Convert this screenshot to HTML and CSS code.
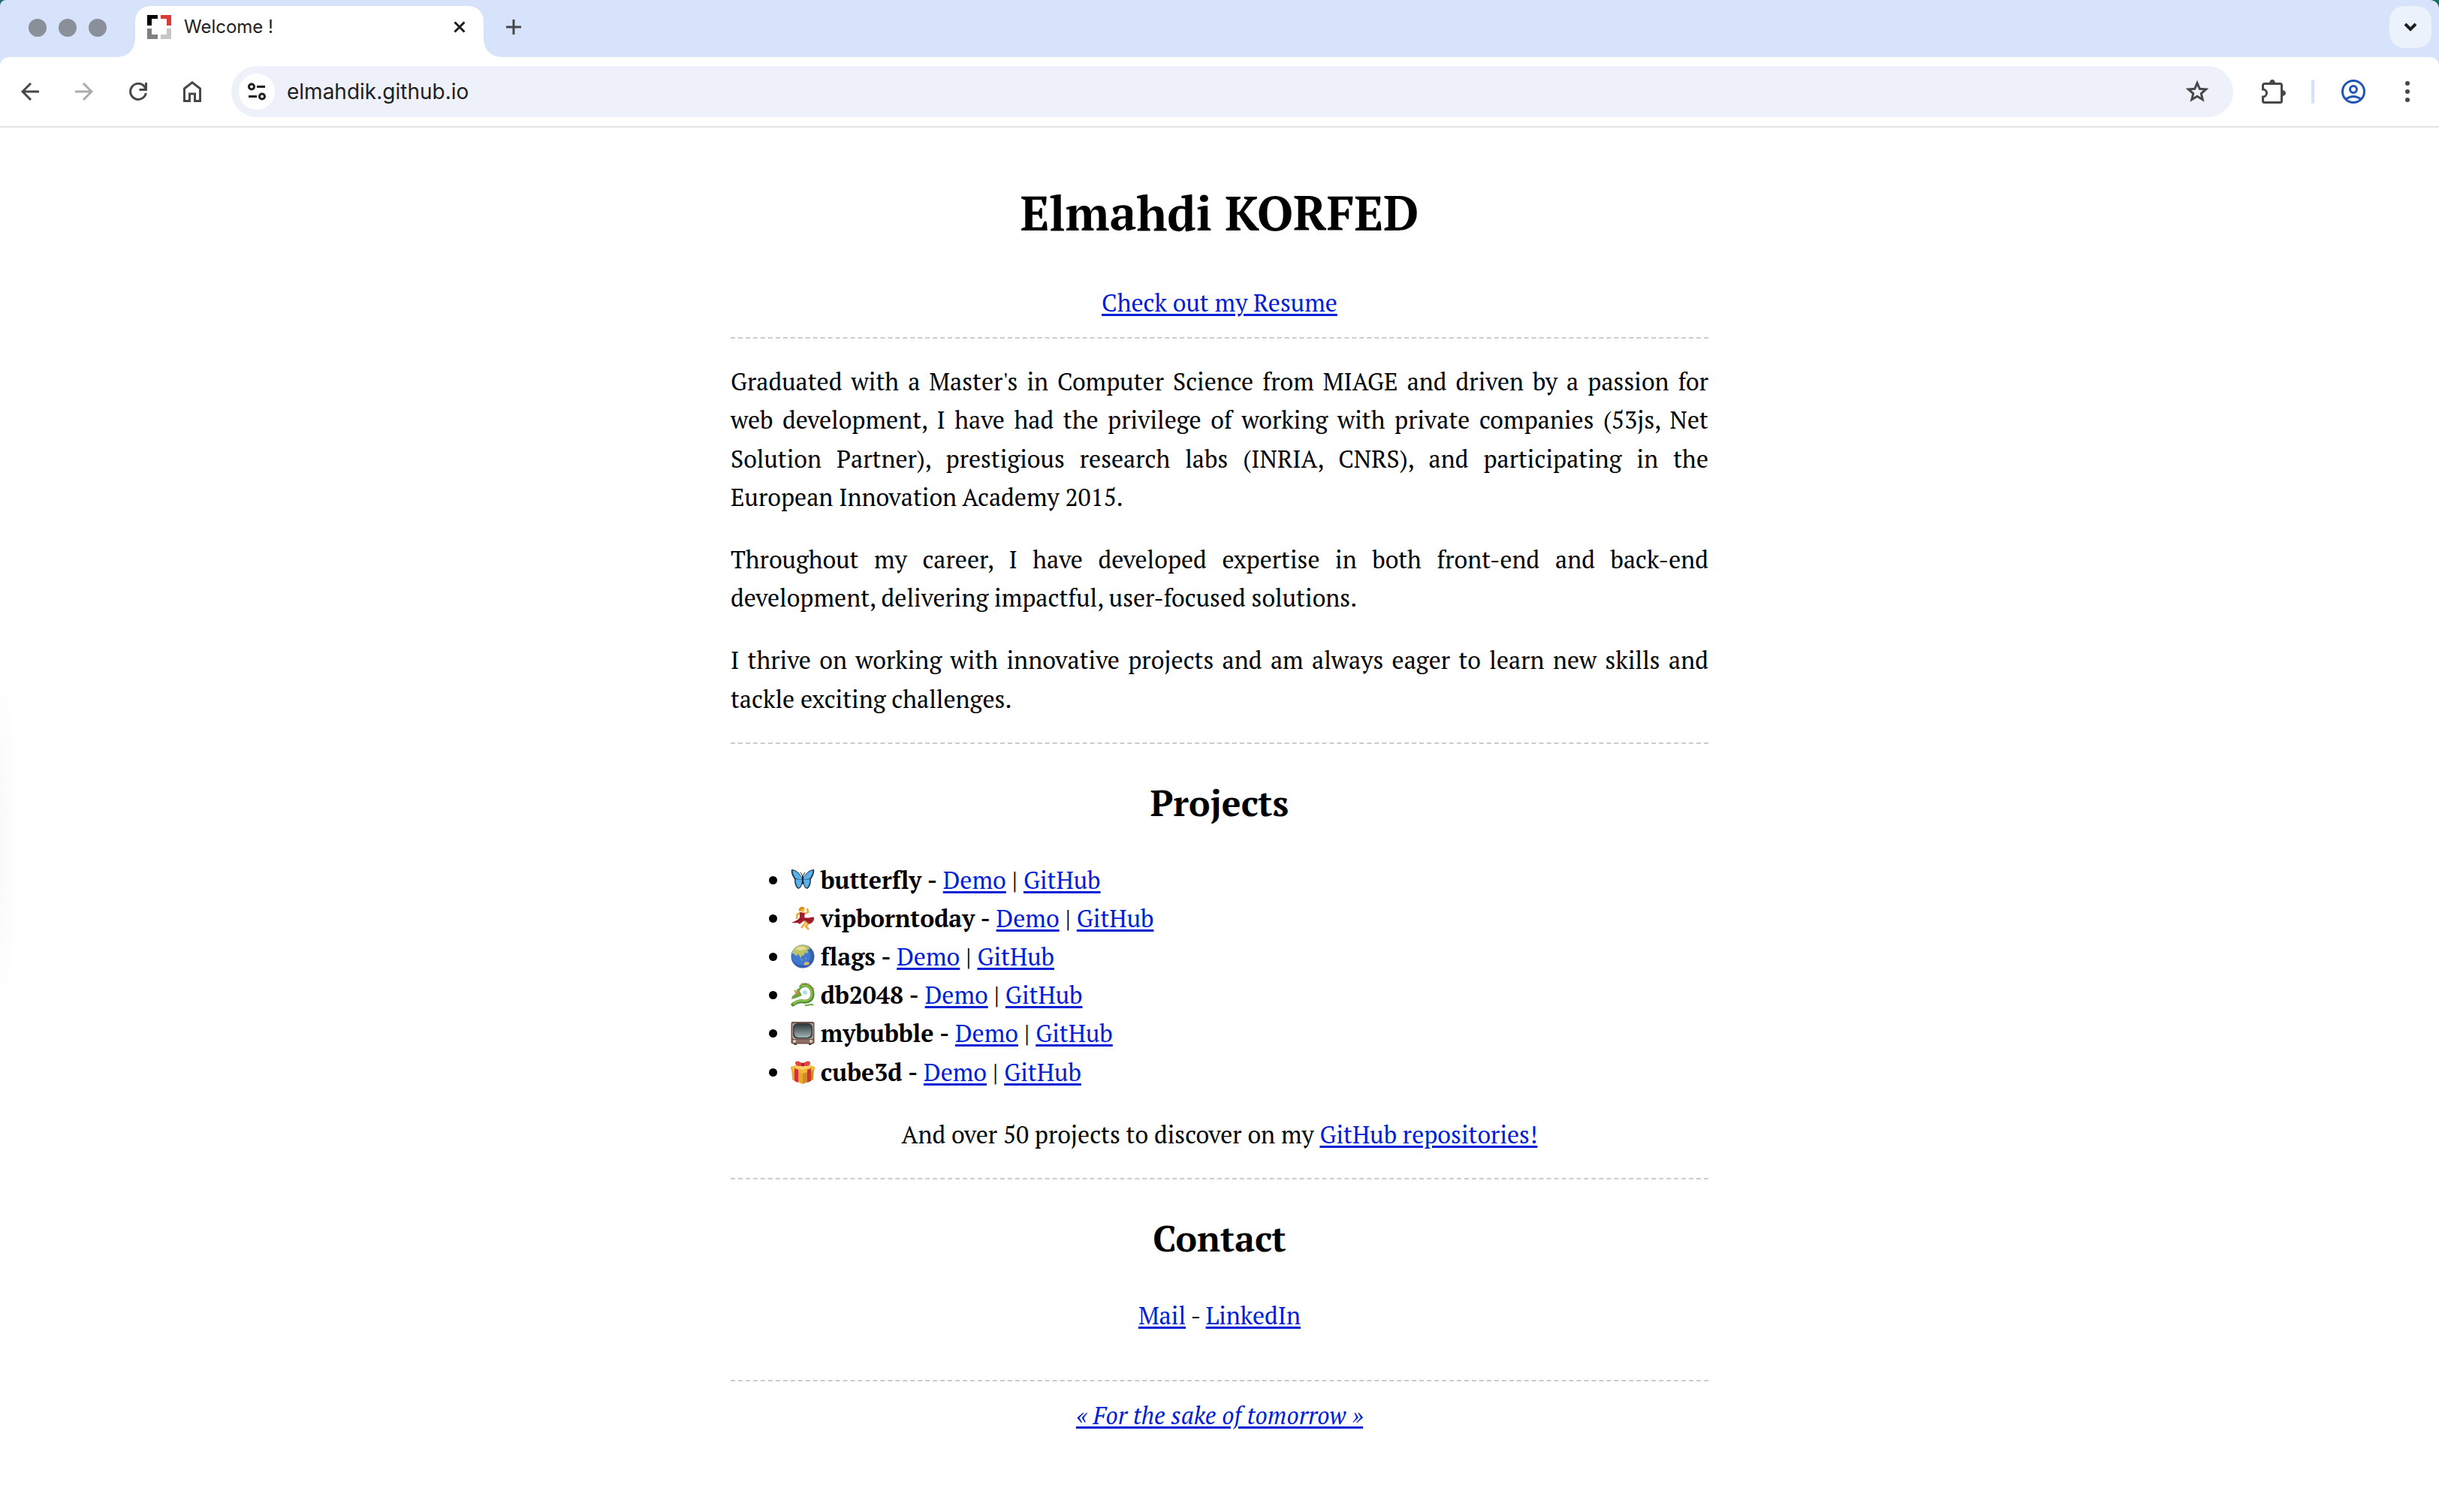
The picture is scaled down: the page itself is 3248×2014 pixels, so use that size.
FILE: index.html
```html
<!DOCTYPE html>
<html lang="en">
<head>
<meta charset="utf-8">
<title>Welcome !</title>
<link rel="stylesheet" href="styles.css">
</head>
<body>
<header class="browser">
  <div class="tabstrip">
    <div class="lights"><span class="light"></span><span class="light"></span><span class="light"></span></div>
    <div class="tab">
      <svg class="favicon" width="32" height="32" viewBox="0 0 32 32" aria-hidden="true">
        <path d="M0 0H14V5H6V14H0z" fill="#000"/><path d="M18 0H32V14H26V5H18z" fill="#dc3a35"/>
        <path d="M0 18H6V26H14V32H0z" fill="#808080"/><path d="M26 18H32V32H18V26H26z" fill="#c6c6c6"/>
      </svg>
      <span class="tab-title">Welcome !</span>
      <button class="tab-close" aria-label="Close tab"><svg width="16" height="16" viewBox="0 0 16 16"><path d="M1.500 1.500 14.500 14.500M14.500 1.500 1.500 14.500" fill="none" stroke="#1f1f1f" stroke-width="3"/></svg></button>
    </div>
    <button class="new-tab" aria-label="New tab"><svg width="20" height="20" viewBox="0 0 20 20"><path d="M10 0V20M0 10H20" stroke="#474747" stroke-width="3"/></svg></button>
    <button class="tab-search" aria-label="Search tabs"><svg width="18" height="12" viewBox="0 0 18 12"><path d="M2 2 9 9 16 2" fill="none" stroke="#1f1f1f" stroke-width="4"/></svg></button>
  </div>
  <nav class="toolbar">
    <button class="tool" aria-label="Back"><svg width="24" height="24" viewBox="0 0 24 24"><path d="M13 1 2 12 13 23M2 12H24"/></svg></button>
    <button class="tool tool-off" aria-label="Forward"><svg width="24" height="24" viewBox="0 0 24 24"><path d="M11 1 22 12 11 23M22 12H0"/></svg></button>
    <button class="tool" aria-label="Reload"><svg width="24" height="24" viewBox="0 0 24 24"><path d="M22.400 14A10.500 10.500 0 1 1 20.500 5.500L22 9M22.500 0V9.500H13.500"/></svg></button>
    <button class="tool" aria-label="Home"><svg width="26" height="28" viewBox="0 0 26 28"><path d="M2.500 26.500V10L13 1.800 23.500 10V26.500H16.500V17H9.500V26.500z"/></svg></button>
    <div class="omnibox">
      <button class="site-info" aria-label="Site information"><svg width="24" height="24" viewBox="0 0 24 24"><circle cx="5" cy="5.500" r="3.500"/><path d="M12 5.500H23M1 18.500H12"/><circle cx="19" cy="18.500" r="3.500"/></svg></button>
      <input class="url" type="text" aria-label="Address" value="elmahdik.github.io">
      <button class="bookmark" aria-label="Bookmark this page"><svg width="32" height="32" viewBox="0 0 32 32"><path d="M16 4.500 19.300 12.300 27.700 13 21.300 18.500 23.200 26.700 16 22.300 8.800 26.700 10.700 18.500 4.300 13 12.700 12.300z"/></svg></button>
    </div>
    <button class="tool" aria-label="Extensions"><svg width="32" height="32" viewBox="0 0 32 32"><path d="M3.500 5.500H24.500a2 2 0 0 1 2 2V28.500a2 2 0 0 1-2 2H3.500a2 2 0 0 1-2-2V23a5 5 0 0 0 0-10V7.500a2 2 0 0 1 2-2z"/><path class="solid" d="M10 5a4 5 0 0 1 8 0zM27 14a5 4 0 0 1 0 8z"/></svg></button>
    <span class="divider"></span>
    <button class="tool tool-profile" aria-label="Profile"><svg width="32" height="32" viewBox="0 0 32 32"><circle cx="16" cy="16" r="14.500"/><circle cx="16" cy="13" r="4.500"/><path d="M6 26Q16 19 26 26"/></svg></button>
    <button class="tool" aria-label="Menu"><svg width="6" height="28" viewBox="0 0 6 28"><g class="solid"><circle cx="3" cy="3" r="3"/><circle cx="3" cy="14" r="3"/><circle cx="3" cy="25" r="3"/></g></svg></button>
  </nav>
</header>

<div class="viewport">
<main class="page">
  <h1 class="name">Elmahdi KORFED</h1>
  <p class="resume"><a href="#resume">Check out my Resume</a></p>
  <section class="about">
    <p>Graduated with a Master's in Computer Science from MIAGE and driven by a passion for web development, I have had the privilege of working with private companies (53js, Net Solution Partner), prestigious research labs (INRIA, CNRS), and participating in the European Innovation Academy 2015.</p>
    <p>Throughout my career, I have developed expertise in both front-end and back-end development, delivering impactful, user-focused solutions.</p>
    <p>I thrive on working with innovative projects and am always eager to learn new skills and tackle exciting challenges.</p>
  </section>
  <section class="block">
    <h2 class="heading">Projects</h2>
    <ul class="projects">
      <li><svg class="emoji" viewBox="0 0 32 32" aria-hidden="true">
        <path d="M15.500 14C12 6 6 2 1 2c-1 4 1 9 4 13 0 5 1 11 5 13 4-1 5-5 5.500-9zM16.500 14C20 6 26 2 31 2c1 4-1 9-4 13 0 5-1 11-5 13-4-1-5-5-5.500-9z" fill="#24384c"/>
        <path d="M15 14C11 7 7 4 2.500 3.500c0 4 2 7.500 4 10.500 3 1 6 1 8.500 1zM15 15.500c-3 0-6 0-8.500-.5 0 4 1 9.500 4 11.500 3-1 4-6 4.500-10zM17 14C21 7 25 4 29.500 3.500c0 4-2 7.500-4 10.500-3 1-6 1-8.500 1zM17 15.500c3 0 6 0 8.500-.5 0 4-1 9.500-4 11.500-3-1-4-6-4.500-10z" fill="#58b2ee"/>
        <path d="M16 11V21" stroke="#2b221c" stroke-width="2" stroke-linecap="round"/><path d="M16 11 13 6M16 11 19 6" stroke="#2b221c"/></svg>
        <b>butterfly -</b> <a href="#butterfly">Demo</a> | <a href="#butterfly-src">GitHub</a></li>
      <li><svg class="emoji" viewBox="0 0 32 32" aria-hidden="true">
        <path d="M8 17 8.500 11 13 9M19 10 23 8 22 3" fill="none" stroke="#eda93c" stroke-width="2.500" stroke-linejoin="round"/>
        <path d="M12 8 19 9 18 15C24 17 30 13 31 15 32 20 27 24 23 24L18 19 12 24C9 21 4 23 1 22 5 20 10 19 12 15z" fill="#a81c2b"/>
        <path d="M14 17 5 22M19 17 28 20M17 18 20 22" stroke="#75121f"/><path d="M18 20 23 24 20 27 24 31M19 23 14 29" fill="none" stroke="#eda93c" stroke-width="2.500"/><circle cx="15.500" cy="5" r="3" fill="#f5c04e"/>
        <path d="M11 7C10 2 13 0 17 1 19 2 19 4 17 4 14 4 14 7 11 7z" fill="#d6932b"/></svg>
        <b>vipborntoday -</b> <a href="#vipborntoday">Demo</a> | <a href="#vipborntoday-src">GitHub</a></li>
      <li><svg class="emoji" viewBox="0 0 32 32" aria-hidden="true">
        <circle cx="16" cy="16" r="15.500" fill="#3560b4"/><circle cx="14" cy="15" r="12.500" fill="#4179d2"/>
        <path d="M2 10C4 4 11 0 18 1c4 1 6 2 8 5l-4 1 1 4-3 1-1-2-1 4-3 1-2 3-2-4-2-1-1 3-3-3-3-1z" fill="#b9c567"/>
        <path d="M6 7 10 3 18 3 21 6 14 8z" fill="#e4dc95"/><path d="M17 26 20 23 25 24 24 27 19 28z" fill="#d9b46c"/><path d="M13 18l3 3-1 1zM19 17l2 2-1 1z" fill="#a9b96a"/></svg>
        <b>flags -</b> <a href="#flags">Demo</a> | <a href="#flags-src">GitHub</a></li>
      <li><svg class="emoji" viewBox="0 0 32 32" aria-hidden="true">
        <path d="M14 5C21 0 29 6 29 15c0 7-5 11-12 10-5-1-10 1-14 4" fill="none" stroke="#4b872f" stroke-width="5" stroke-linecap="round"/>
        <path d="M14 5C21 1 28 7 28 15c0 6-5 10-11 9-4-1-9 1-13 4" fill="none" stroke="#85bd4f" stroke-width="3" stroke-linecap="round"/>
        <path d="M16 4 12 11 15 17 8 20 1 22 2 18 7 14 8 9z" fill="#6ba63e"/><path d="M5 10 8 15 11 11M14 2l3-1M22 3l3-1M29 8l2-1" stroke="#d98a45" stroke-width="2" fill="none"/>
        <circle cx="19" cy="13" r="3" fill="#b9deeb"/><path d="M19 30c4 1 8-3 11 0" stroke="#6ba63e" stroke-width="2" fill="none"/></svg>
        <b>db2048 -</b> <a href="#db2048">Demo</a> | <a href="#db2048-src">GitHub</a></li>
      <li><svg class="emoji" viewBox="0 0 32 32" aria-hidden="true">
        <defs><linearGradient id="screen" x2="0" y2="1"><stop stop-color="#2f3a3d"/><stop offset="1" stop-color="#a3b5b5"/></linearGradient></defs>
        <path d="M3 29H8V32H5zM24 29H29L27 32H24z" fill="#4b3832"/><rect x=".5" y="1" width="31" height="29.500" rx="2" fill="#705047"/><rect x="2" y="3" width="28" height="21" rx="2" fill="#aaa49f"/>
        <rect x="3" y="3" width="26" height="20.500" rx="6" fill="#343a3a"/><rect x="4.500" y="4.500" width="23" height="17.500" rx="6" fill="url(#screen)"/>
        <rect x="2" y="25" width="28" height="4" fill="#8d7063"/><circle cx="5" cy="27" r="2" fill="#ddd4c6"/><circle cx="27" cy="27" r="2" fill="#ddd4c6"/></svg>
        <b>mybubble -</b> <a href="#mybubble">Demo</a> | <a href="#mybubble-src">GitHub</a></li>
      <li><svg class="emoji" viewBox="0 0 32 32" aria-hidden="true">
        <path d="M1 10 16 15V32L2 26z" fill="#e9a832"/><path d="M31 10 16 15V32L30 26z" fill="#d08c28"/>
        <path d="M0 9 16 4 32 9V13L16 18 0 13z" fill="#f0b63e"/><path d="M4 9 16 5 28 9 16 13z" fill="#fbd469"/>
        <path d="M5 11 10 13V30L5 28zM27 11 22 13V30L27 28z" fill="#d3332f"/><path d="M16 7C12 9 6 8 6 4 6 0 12 1 16 5 20 1 26 0 26 4 26 8 20 9 16 7z" fill="#df4642"/><circle cx="16" cy="6" r="2.500" fill="#b52328"/></svg>
        <b>cube3d -</b> <a href="#cube3d">Demo</a> | <a href="#cube3d-src">GitHub</a></li>
    </ul>
    <p class="center">And over 50 projects to discover on my <a href="#repositories">GitHub repositories!</a></p>
  </section>
  <section class="block block-contact">
    <h2 class="heading">Contact</h2>
    <p class="center"><a href="#mail">Mail</a> - <a href="#linkedin">LinkedIn</a></p>
  </section>
  <footer class="motto"><a href="#tomorrow">« For the sake of tomorrow »</a></footer>
</main>
</div>
</body>
</html>
```
FILE: styles.css
```css
* { box-sizing: border-box; }

body {
  margin: 0;
  background: #fff;
  color: #000;
  font: 32px/1.6 "PT Serif", "Liberation Serif", serif;
  font-variant-ligatures: none;
}

h1, h2, p, ul { margin: 0; }

button {
  display: flex;
  align-items: center;
  justify-content: center;
  padding: 0;
  border: 0;
  background: none;
}

/* Browser frame */
.browser {
  background: #1c6b60;
  color: #1f1f1f;
  font-family: Inter, sans-serif;
}

.tabstrip {
  display: flex;
  align-items: flex-start;
  height: 88px;
  margin-bottom: -12px;
  padding: 8px 10px 0 38px;
  border-radius: 8px 12px 0 0;
  background: #d6e3fa;
}

.lights { display: flex; gap: 16px; padding-top: 17px; }
.light { width: 24px; height: 24px; border-radius: 50%; background: #8a9099; }

.tab {
  position: relative;
  display: flex;
  align-items: center;
  width: 464px;
  height: 68px;
  margin-left: 38px;
  padding: 0 16px 12px;
  border-radius: 20px 20px 0 0;
  background: #fff;
}

/* Curved feet that join the tab to the toolbar */
.tab::before,
.tab::after {
  content: "";
  position: absolute;
  bottom: 0;
  width: 22px;
  height: 22px;
}
.tab::before { right: 100%; background: radial-gradient(circle at 0 0, transparent 21px, #fff 22px); }
.tab::after { left: 100%; background: radial-gradient(circle at 100% 0, transparent 21px, #fff 22px); }

.tab-title { flex: 1; margin-left: 17px; font-size: 24px; line-height: 32px; }
.tab-close { width: 32px; height: 32px; }
.new-tab { width: 56px; height: 56px; margin-left: 12px; }
.tab-search { width: 56px; height: 56px; margin-left: auto; border-radius: 20px; background: #ecf2fc; }

.toolbar {
  position: relative;
  display: flex;
  align-items: center;
  gap: 16px;
  height: 94px;
  padding: 0 14px 0 12px;
  border-bottom: 2px solid #e2e2e2;
  border-radius: 12px 12px 0 0;
  background: #fff;
}

.tool { width: 56px; height: 56px; }
.toolbar svg { fill: none; stroke: #474747; stroke-width: 3; }
.toolbar .tool-off svg { stroke: #ababab; }
.toolbar .tool-profile svg { stroke: #1f55b5; }
.toolbar .solid { fill: #474747; stroke: none; }

.omnibox {
  display: flex;
  flex: 1;
  align-items: center;
  height: 68px;
  margin: 0 10px 0 8px;
  padding: 0 32px 0 10px;
  border-radius: 34px;
  background: #eef1fa;
}
.site-info { width: 48px; height: 48px; border-radius: 50%; background: #fff; }
.toolbar .site-info svg { stroke: #1f1f1f; }
.url {
  flex: 1;
  min-width: 0;
  margin-left: 16px;
  padding: 0;
  border: 0;
  background: none;
  color: #1f1f1f;
  font: 28px/40px Inter, sans-serif;
}
.divider { width: 4px; height: 32px; margin: 0 8px 0 6px; border-radius: 2px; background: #d3e3fd; }

/* Page */
.viewport { background: radial-gradient(24px 270px at 0 949px, #f9f9f9, #fff); }

.page { max-width: 1302px; margin: 0 auto; padding: 73px 0 60px; }

a {
  color: #0020d6;
  text-decoration-thickness: 3px;
  text-underline-offset: 3px;
}

.name { font-size: 64px; line-height: 80px; text-align: center; }
.resume { margin-top: 55px; padding-bottom: 20px; text-align: center; }

.about,
.block,
.motto { border-top: 2px dashed #ccc; }

.about {
  display: flex;
  flex-direction: column;
  gap: 32px;
  padding: 32px 0;
  text-align: justify;
}

.block { padding: 48px 0 32px; }
.heading { margin-bottom: 48px; font-size: 48px; line-height: 60px; text-align: center; }
.projects { margin-bottom: 32px; padding-left: 80px; }
.emoji { width: 32px; height: 32px; vertical-align: -4px; }
.center { text-align: center; }
.block-contact { padding-bottom: 60px; }
.motto { padding-top: 20px; font-style: italic; text-align: center; }
```
